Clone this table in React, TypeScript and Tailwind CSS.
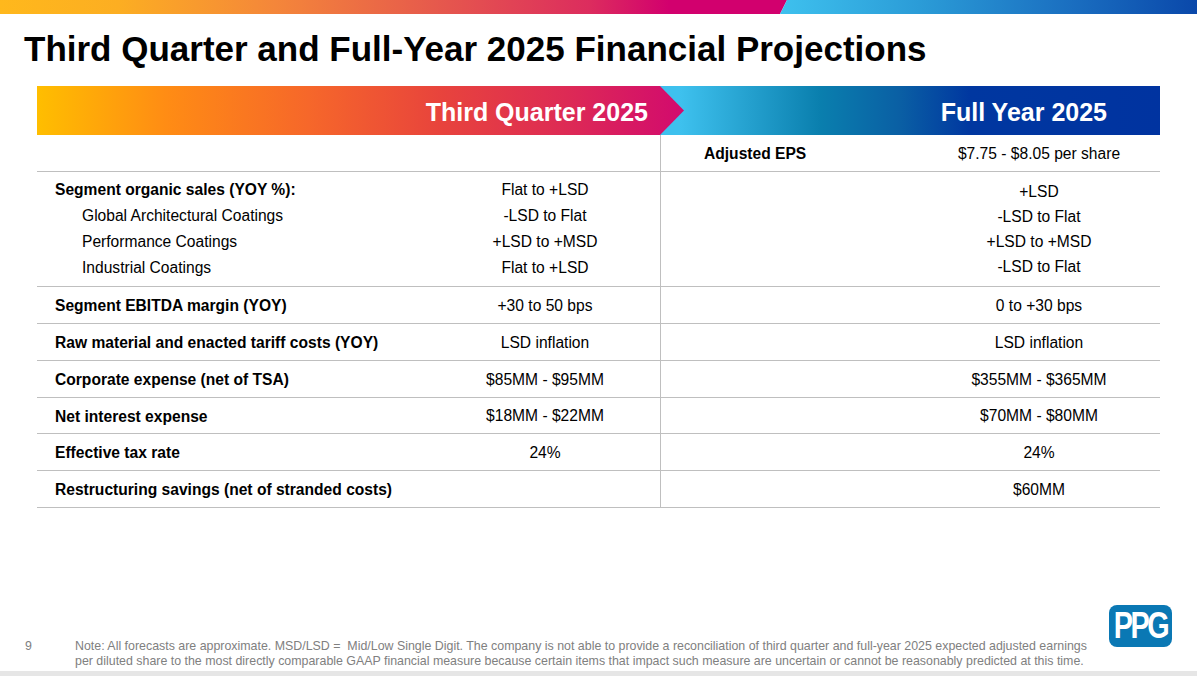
import React from "react";

type Row = {
  label: string;
  sub?: string[];
  q3: string[];
  fy: string[];
  h: string;
};

const rows: Row[] = [
  {
    label: "Segment organic sales (YOY %):",
    sub: ["Global Architectural Coatings", "Performance Coatings", "Industrial Coatings"],
    q3: ["Flat to +LSD", "-LSD to Flat", "+LSD to +MSD", "Flat to +LSD"],
    fy: ["+LSD", "-LSD to Flat", "+LSD to +MSD", "-LSD to Flat"],
    h: "h-[115px]",
  },
  { label: "Segment EBITDA margin (YOY)", q3: ["+30 to 50 bps"], fy: ["0 to +30 bps"], h: "h-[37px]" },
  { label: "Raw material and enacted tariff costs (YOY)", q3: ["LSD inflation"], fy: ["LSD inflation"], h: "h-[37px]" },
  { label: "Corporate expense (net of TSA)", q3: ["$85MM - $95MM"], fy: ["$355MM - $365MM"], h: "h-[37px]" },
  { label: "Net interest expense", q3: ["$18MM - $22MM"], fy: ["$70MM - $80MM"], h: "h-[36px]" },
  { label: "Effective tax rate", q3: ["24%"], fy: ["24%"], h: "h-[37px]" },
  { label: "Restructuring savings (net of stranded costs)", q3: [], fy: ["$60MM"], h: "h-[37px]" },
];

function DataRow({ row }: { row: Row }) {
  if (row.sub) {
    return (
      <div className={`grid grid-cols-[393px_230px_258px_242px] ${row.h} border-b border-[#bfbfbf]`}>
        <div className="pl-[18px] pt-[5px] leading-[26px]">
          <div className="font-bold">{row.label}</div>
          {row.sub.map((s) => (
            <div key={s} className="pl-[27px]">
              {s}
            </div>
          ))}
        </div>
        <div className="pt-[5px] leading-[26px] text-center">
          {row.q3.map((v, i) => (
            <div key={i}>{v}</div>
          ))}
        </div>
        <div className="border-l border-[#bfbfbf]" />
        <div className="pt-[7px] leading-[25px] text-center">
          {row.fy.map((v, i) => (
            <div key={i}>{v}</div>
          ))}
        </div>
      </div>
    );
  }
  return (
    <div className={`grid grid-cols-[393px_230px_258px_242px] ${row.h} border-b border-[#bfbfbf] items-center`}>
      <div className="pl-[18px] pt-[2px] font-bold">{row.label}</div>
      <div className="text-center pt-[1px]">{row.q3[0]}</div>
      <div className="border-l border-[#bfbfbf] self-stretch" />
      <div className="text-center pt-[1px]">{row.fy[0]}</div>
    </div>
  );
}

export default function App() {
  return (
    <div className="w-[1197px] h-[676px] bg-white relative overflow-hidden flex flex-col font-['Liberation_Sans',Arial,sans-serif] text-black">
      {/* top color strip */}
      <div className="flex h-[14px] shrink-0">
        <div className="w-[787px] shrink-0 bg-[linear-gradient(to_right,#ffb81c_0%,#fcae22_15%,#f4863a_35%,#e65a4c_55%,#dc2c5e_75%,#d2006e_85%,#d2006e_100%)] [clip-path:polygon(0_0,100%_0,calc(100%-7px)_100%,0_100%)]" />
        <div className="flex-1 -ml-[7px] bg-[linear-gradient(to_right,#3ec1ee_0%,#2a9ad6_35%,#1a6ec0_70%,#0a48aa_100%)] [clip-path:polygon(7px_0,100%_0,100%_100%,0_100%)]" />
      </div>

      <h1 className="pl-[24px] mt-[17px] text-[35px] leading-[36px] font-bold whitespace-nowrap">
        Third Quarter and Full-Year 2025 Financial Projections
      </h1>

      {/* header band */}
      <div className="ml-[37px] w-[1123px] mt-[19px] h-[49px] flex shrink-0">
        <div className="w-[647px] shrink-0 relative z-10 flex items-center justify-end pr-[36px] pt-[4px] bg-[linear-gradient(to_right,#ffbe00_0%,#ff8c14_20%,#f6672a_42%,#e8443c_62%,#dd2a55_82%,#d20a6e_100%)] [clip-path:polygon(0_0,623px_0,647px_50%,623px_100%,0_100%)]">
          <span className="text-white font-bold text-[25px]">Third Quarter 2025</span>
        </div>
        <div className="flex-1 -ml-[24px] flex items-center justify-end pr-[53px] pt-[5px] bg-[linear-gradient(to_right,#3ec1ee_4%,#0a7fae_32%,#0a5fa4_48%,#0037a0_62%,#0033a0_100%)]">
          <span className="text-white font-bold text-[25px]">Full Year 2025</span>
        </div>
      </div>

      {/* table */}
      <div className="ml-[37px] w-[1123px] text-[15.6px]">
        <div className="grid grid-cols-[393px_230px_258px_242px] h-[37px] border-b border-[#bfbfbf] items-center">
          <div />
          <div />
          <div className="border-l border-[#bfbfbf] self-stretch flex items-center pt-[2px] pl-[43px] font-bold">
            Adjusted EPS
          </div>
          <div className="text-center pt-[2px]">$7.75 - $8.05 per share</div>
        </div>
        {rows.map((r) => (
          <DataRow key={r.label} row={r} />
        ))}
      </div>

      <div className="flex-1" />

      {/* footer */}
      <div className="flex items-start pb-[2px] pl-[25px] pr-[25px] text-[12.4px] leading-[15px] text-[#808080]">
        <div className="w-[50px] shrink-0">9</div>
        <div className="flex-1 whitespace-nowrap">
          Note: All forecasts are approximate. MSD/LSD =&nbsp; Mid/Low Single Digit. The company is not able to provide a reconciliation of third quarter and full-year 2025 expected adjusted earnings
          <br />
          per diluted share to the most directly comparable GAAP financial measure because certain items that impact such measure are uncertain or cannot be reasonably predicted at this time.
        </div>
        <div className="shrink-0 -mt-[34px] w-[63px] h-[42px] rounded-[8px] bg-[#0a78b4] flex items-center justify-center overflow-hidden">
          <span className="text-white font-bold text-[36px] leading-none tracking-[-3px] scale-x-[0.8] font-['Liberation_Sans_Narrow','Liberation_Sans',sans-serif]">
            PPG
          </span>
        </div>
      </div>

      <div className="h-[5px] bg-[#e6e6e6] shrink-0" />
    </div>
  );
}
